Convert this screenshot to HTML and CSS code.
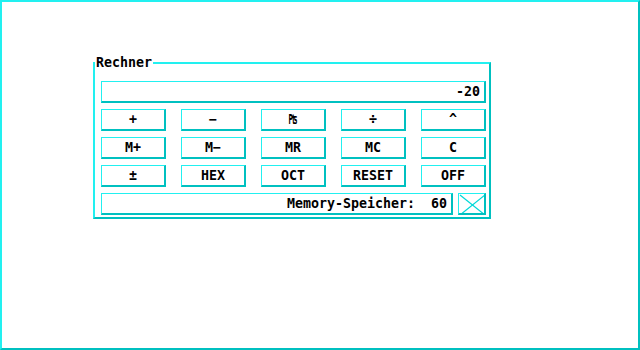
FILE: index.html
```html
<!DOCTYPE html>
<html lang="de">
<head>
<meta charset="utf-8">
<title>Rechner</title>
<link rel="stylesheet" href="styles.css">
</head>
<body>
<div class="screen">
  <fieldset class="group">
    <legend class="title">Rechner</legend>
    <div class="display">-20</div>
    <div class="keys">
      <button class="key">+</button>
      <button class="key">&minus;</button>
      <button class="key">&#x20A7;</button>
      <button class="key">&divide;</button>
      <button class="key">^</button>
      <button class="key">M+</button>
      <button class="key">M&minus;</button>
      <button class="key">MR</button>
      <button class="key">MC</button>
      <button class="key">C</button>
      <button class="key">&plusmn;</button>
      <button class="key">HEX</button>
      <button class="key">OCT</button>
      <button class="key">RESET</button>
      <button class="key">OFF</button>
    </div>
    <div class="bottom">
      <div class="memory">Memory-Speicher:&nbsp;&nbsp;60</div>
      <div class="close">
        <svg width="27" height="22" viewBox="0 0 27 22">
          <line x1="1" y1="1" x2="26" y2="21" stroke="#00d8d8" stroke-width="1.2"/>
          <line x1="26" y1="1" x2="1" y2="21" stroke="#00d8d8" stroke-width="1.2"/>
        </svg>
      </div>
    </div>
  </fieldset>
</div>
</body>
</html>
```
FILE: styles.css
```css
* { box-sizing: border-box; }
html, body { margin: 0; padding: 0; background: #fff; }
body {
  font-family: "DejaVu Sans Mono", "Liberation Mono", monospace;
  font-weight: bold;
  font-size: 13.3px;
  color: #000;
}
.screen {
  width: 640px;
  height: 350px;
  border: 2px solid;
  border-color: #22f0f0 #00c0c0 #00c0c0 #22f0f0;
  padding: 0 0 0 91px;
  overflow: hidden;
}
.group {
  margin: 54px 0 0 0;
  width: 398px;
  padding: 12px 3px 2px 6px;
  border: 2px solid;
  border-color: #22f0f0 #00c0c0 #00c0c0 #22f0f0;
  min-width: 0;
}
.title {
  padding: 0 1px;
  margin-left: -6px;
  line-height: 13px;
  font-size: 13.3px;
}
.display, .memory {
  height: 22px;
  line-height: 20px;
  text-align: right;
  border: 1px solid #22f0f0;
  border-right: 2px solid #00c0c0;
  border-bottom: 2px solid #00c0c0;
}
.display {
  width: 385px;
  padding-right: 4px;
  margin-bottom: 6px;
}
.keys {
  display: grid;
  grid-template-columns: repeat(5, 65px);
  column-gap: 15px;
  row-gap: 6px;
  margin-bottom: 6px;
}
.key {
  height: 22px;
  padding: 0;
  margin: 0;
  background: #fff;
  font: inherit;
  color: #000;
  line-height: 18px;
  border: 1px solid #22f0f0;
  border-right: 2px solid #00c0c0;
  border-bottom: 2px solid #00c0c0;
  border-radius: 0;
}
.bottom {
  display: flex;
  gap: 5px;
  width: 385px;
}
.memory {
  width: 352px;
  padding-right: 4px;
}
.close {
  width: 28px;
  height: 22px;
  border: 1px solid #22f0f0;
  border-right: 2px solid #00c0c0;
  border-bottom: 2px solid #00c0c0;
  line-height: 0;
  overflow: hidden;
}
.close svg { display: block; }
```
